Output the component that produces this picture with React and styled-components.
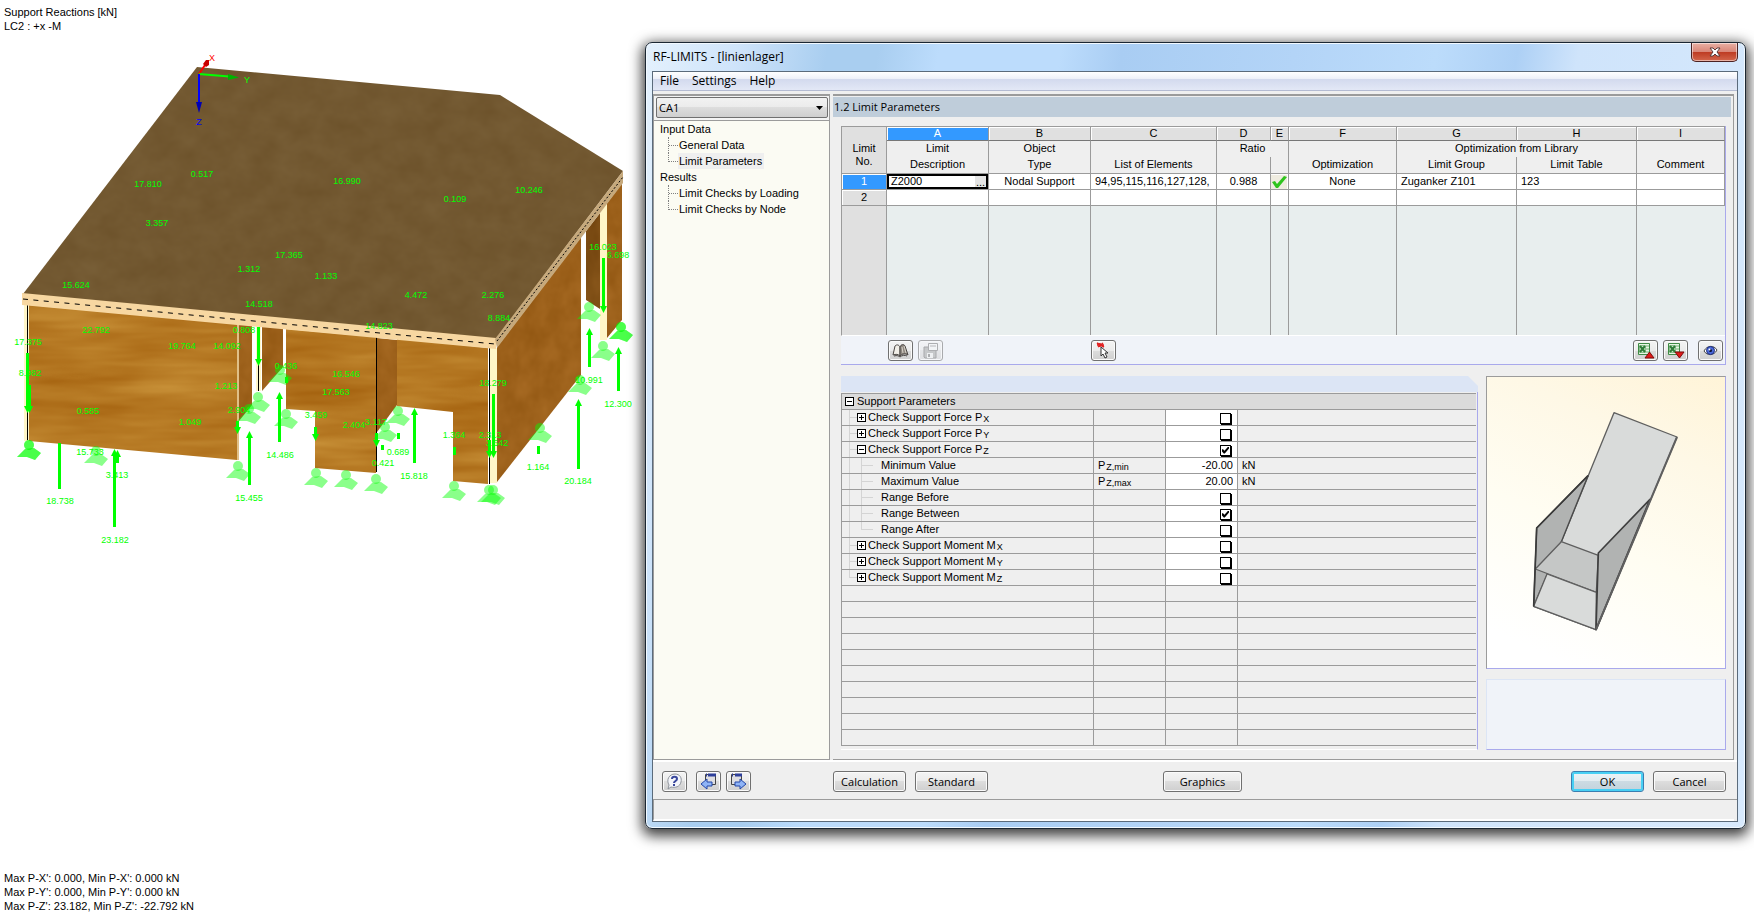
import React from "react";
import styled, { createGlobalStyle, css } from "styled-components";

const GRID_LINE = "#9b9b9b";
const LILAC = "#a9a9ec";
const UI_FONT = '"Open Sans", "Noto Sans", sans-serif';
const GRID_FONT = '"Liberation Sans", Arial, sans-serif';

const GlobalStyle = createGlobalStyle`
  * { box-sizing: border-box; }
  body { margin: 0; background: #fff; color: #000; font: 11px/16px ${GRID_FONT}; }
  button, input, select { font: inherit; color: inherit; margin: 0; padding: 0; }
`;

const Desktop = styled.main`
  display: flex;
  align-items: flex-start;
  min-height: 100vh;
  overflow: hidden;
`;

/* ---------- model view ---------- */

const ModelView = styled.section`
  flex: 0 0 645px;
  display: flex;
  flex-direction: column;
  min-height: 100vh;
`;

const Caption = styled.p`
  margin: 0;
  padding: ${(p) => (p.$bottom ? "0 0 4px 4px" : "5px 0 0 4px")};
  margin-top: ${(p) => (p.$bottom ? "auto" : "0")};
  line-height: 14px;
  white-space: pre-line;
`;

const Drawing = styled.svg`
  display: block;
  width: 100%;
`;

const Value = styled.text`
  font: 9px ${GRID_FONT};
  fill: ${(p) => p.$color || "#00ff00"};
  text-anchor: middle;
`;

const values = [
  ["17.810", 148, 184], ["0.517", 202, 174], ["3.357", 157, 223], ["17.365", 289, 255],
  ["1.312", 249, 269], ["1.133", 326, 276], ["15.624", 76, 285], ["16.990", 347, 181],
  ["0.109", 455, 199], ["10.246", 529, 190], ["16.023", 603, 247], ["6.698", 618, 255],
  ["4.472", 416, 295], ["2.276", 493, 295], ["8.884", 499, 318], ["14.823", 379, 326],
  ["14.518", 259, 304], ["22.792", 96, 330], ["17.375", 28, 342], ["8.982", 30, 373],
  ["19.764", 182, 346], ["14.092", 227, 346], ["0.808", 244, 330], ["1.213", 226, 386],
  ["2.904", 239, 410], ["0.436", 286, 366], ["0.585", 88, 411], ["1.049", 190, 422],
  ["15.733", 90, 452], ["3.413", 117, 475], ["18.738", 60, 501], ["23.182", 115, 540],
  ["14.486", 280, 455], ["15.455", 249, 498], ["3.459", 316, 415], ["16.546", 346, 374],
  ["17.563", 336, 392], ["2.404", 354, 425], ["3.117", 376, 422], ["0.421", 383, 463],
  ["0.689", 398, 452], ["15.818", 414, 476], ["1.364", 454, 435], ["2.313", 490, 435],
  ["3.642", 497, 443], ["18.279", 493, 383], ["1.164", 538, 467], ["20.184", 578, 481],
  ["10.991", 589, 380], ["12.300", 618, 404],
];

const supports = [
  [29, 445], [29, 445], [96, 451], [238, 466], [258, 397], [249, 409], [280, 370], [286, 414],
  [316, 473], [346, 475], [376, 479], [385, 427], [398, 411], [454, 486], [489, 490], [493, 490],
  [540, 428], [580, 380], [603, 346], [589, 307], [621, 327], [621, 327],
];

const upArrows = [
  [114, 527, 449], [249, 485, 431], [279, 442, 392], [414, 463, 408],
  [589, 367, 328], [618, 391, 347], [578, 469, 399], [117, 463, 450],
];

const downArrows = [
  [27, 353, 413], [29, 385, 413], [258, 327, 366], [237, 421, 434], [315, 427, 441],
  [376, 433, 447], [493, 394, 458], [489, 440, 458], [603, 258, 313],
];

const stubs = [
  [398, 433, 439], [382, 445, 450], [454, 447, 455], [538, 446, 454], [286, 377, 383], [59, 443, 489],
];

function Wood({ id, frequency, seed, from, to }) {
  const channel = (i) => `${from[i]} ${to[i]}`;
  return (
    <filter id={id} x="0" y="0" width="100%" height="100%" colorInterpolationFilters="sRGB">
      <feTurbulence type="fractalNoise" baseFrequency={frequency} numOctaves="3" seed={seed} />
      <feColorMatrix values="1 0 0 0 0  1 0 0 0 0  1 0 0 0 0  0 0 0 0 1" />
      <feComponentTransfer>
        <feFuncR type="table" tableValues={channel(0)} />
        <feFuncG type="table" tableValues={channel(1)} />
        <feFuncB type="table" tableValues={channel(2)} />
      </feComponentTransfer>
      <feComposite operator="in" in2="SourceGraphic" />
    </filter>
  );
}

function Model() {
  return (
    <Drawing viewBox="0 33 645 520" role="img" aria-label="Support reactions of the model">
      <defs>
        <Wood id="front" frequency="0.008 0.06" seed="4" from={[0.62, 0.35, 0.03]} to={[0.8, 0.59, 0.24]} />
        <Wood id="side" frequency="0.05 0.04" seed="9" from={[0.56, 0.33, 0.06]} to={[0.67, 0.43, 0.15]} />
        <Wood id="dark" frequency="0.06 0.03" seed="2" from={[0.44, 0.26, 0.05]} to={[0.56, 0.36, 0.12]} />
        <Wood id="roof" frequency="0.04 0.05" seed="7" from={[0.425, 0.32, 0.165]} to={[0.475, 0.375, 0.22]} />
      </defs>

      <g filter="url(#dark)">
        <polygon points="586,231 600,213 600,309 586,300" />
      </g>
      <g filter="url(#side)">
        <polygon points="607,203 622,183 622,320 607,338" />
        <polygon points="497,347 581,237 581,375 497,482" />
        <polygon points="239,324 252,325 252,405 239,421" />
        <polygon points="262,326 283,328 283,367 262,391" />
        <polygon points="377,338 397,340 397,405 377,432" />
      </g>
      <g filter="url(#front)">
        <polygon points="29,305 237,324 237,460 29,441" />
        <polygon points="286,329 376,337 376,473 315,468 315,411 286,409" />
        <polygon points="397,339 453,344 453,412 397,406" />
      </g>
      <g filter="url(#front)">
        <polygon points="453,344 488,348 488,484 453,481" />
      </g>

      <g fill="#fff6c8">
        <path d="M24 304H29V441H24Z M256 326H261V391H256Z M490 348H497V483H490Z M600 213L607 203V340H600Z" />
      </g>
      <path d="M237 324H239V460H237Z" fill="#e0c088" />
      <path d="M27.5 304V440 M258.5 327V391 M376.5 337V472 M489.5 348V484" stroke="#000" />

      <g filter="url(#roof)">
        <polygon points="197,67 500,95 623,171 496,339 23,294" />
      </g>
      <polygon points="22,293 496,338 496,349 22,305" fill="#f7d7a1" />
      <polygon points="495,339 623,171 623,183 497,348" fill="#c6a97c" />
      <path d="M23 299L495 344" stroke="#000" strokeDasharray="5 5.4" />
      <path d="M497 341L623 177" stroke="#000" strokeDasharray="2 2" />

      {supports.map(([x, y], i) => (
        <g key={i} fill="#00ff00" fillOpacity="0.46" transform={`translate(${x} ${y})`}>
          <circle r="5" />
          <path d="M-4 4L-12 12L-2 12L6 15L12 8L5 3Z" />
        </g>
      ))}

      <g stroke="#00ff00" fill="#00ff00" strokeWidth="3">
        {upArrows.map(([x, tail, head]) => (
          <g key={`${x}-${tail}`}>
            <path d={`M${x + 0.5} ${tail}V${head + 6}`} />
            <path d={`M${x - 3} ${head + 7}L${x + 0.5} ${head}L${x + 4} ${head + 7}Z`} stroke="none" />
          </g>
        ))}
        {downArrows.map(([x, tail, head]) => (
          <g key={`${x}-${tail}`}>
            <path d={`M${x + 0.5} ${tail}V${head - 6}`} />
            <path d={`M${x - 3} ${head - 7}L${x + 0.5} ${head}L${x + 4} ${head - 7}Z`} stroke="none" />
          </g>
        ))}
        {stubs.map(([x, from, to]) => (
          <path key={`${x}-${from}`} d={`M${x + 0.5} ${from}V${to}`} />
        ))}
      </g>

      <path d="M199 74L205 65" stroke="#f00" strokeWidth="2" />
      <path d="M203 64L206 60H209V65L206 67Z" fill="#c80000" />
      <path d="M199 74L229 76.5" stroke="#0f0" strokeWidth="2" />
      <path d="M228 74L239 77.5L228 80Z" fill="#00b400" />
      <path d="M199 74V104" stroke="#00f" strokeWidth="2" />
      <path d="M196 102H202L199 113Z" fill="#0000b4" />
      <Value x="212" y="61" $color="#ff0000">X</Value>
      <Value x="247" y="83">Y</Value>
      <Value x="199" y="125" $color="#0000ff">Z</Value>

      {values.map(([label, x, y]) => (
        <Value key={`${x}-${y}`} x={x} y={y + 3}>{label}</Value>
      ))}
    </Drawing>
  );
}

/* ---------- window frame ---------- */

const Frame = styled.section`
  flex: 1;
  min-width: 0;
  margin: 42px 8px 0 0;
  padding: 0 7px 6px 6px;
  border: 1px solid #1b2733;
  border-radius: 7px;
  background:
    linear-gradient(100deg, #e4f1fd 0, #cfe4fa 90px, #a9cef0 180px, #a9cef0 230px, #bcdcfc 290px, #bcdcfc 410px, #a9cdf3 470px, #b3d4f7 640px, #bcdcfb 780px, #add0f5 860px, #cfe4fb 920px, #d8eafd 100%);
  box-shadow: inset 0 0 0 1px #f2f9ff, 0 4px 13px 3px rgba(0, 0, 0, 0.75);
`;

const TitleBar = styled.header`
  display: flex;
  justify-content: space-between;
  align-items: flex-start;
  height: 28px;
  font: 12px/16px ${UI_FONT};
`;

const WindowTitle = styled.h1`
  margin: 6px 0 0 1px;
  font: inherit;
`;

const CloseButton = styled.button`
  display: flex;
  align-items: center;
  justify-content: center;
  width: 47px;
  height: 19px;
  border: 1px solid #4b2222;
  border-top: 0;
  border-radius: 0 0 5px 5px;
  background: linear-gradient(#e9b0a4, #d98678 48%, #bd3a22 50%, #d3664c);
  box-shadow: inset 0 0 0 1px rgba(255, 255, 255, 0.5);
`;

const Client = styled.div`
  border: 1px solid #5b6b7b;
  background: #efefef;
`;

const MenuBar = styled.nav`
  display: flex;
  gap: 13px;
  height: 19px;
  padding-left: 7px;
  border-bottom: 1px solid #b4bbd2;
  background: linear-gradient(#fff, #eef1f9 36%, #d3daee 40%, #e3e8f6);
  font: 12px/18px ${UI_FONT};
`;

const MenuItem = styled.button`
  border: 0;
  background: none;
`;

const Body = styled.div`
  display: grid;
  grid-template-columns: 177px 1fr;
  gap: 3px;
  margin: 3px 0 0;
  padding-right: 3px;
  padding-bottom: 2px;
  background: linear-gradient(#fff, #fff) bottom / 100% 2px no-repeat;
`;

/* ---------- navigator ---------- */

const Navigator = styled.aside`
  border: 1px solid ${GRID_LINE};
  border-top-width: 2px;
  background: #fbfbf3;
`;

const CaseBox = styled.div`
  position: relative;
  padding: 1px 1px 2px 2px;
  border-bottom: 1px solid ${GRID_LINE};
  background: #f4f4f4;
`;

const CaseSelect = styled.select`
  display: block;
  width: 100%;
  height: 21px;
  padding: 0 4px 0 2px;
  appearance: none;
  border: 1px solid #707070;
  border-radius: 2px;
  background: linear-gradient(#f2f2f2, #ebebeb 50%, #dddddd 50%, #cfcfcf);
  font-family: ${UI_FONT};
`;

const CaseArrow = styled.svg`
  position: absolute;
  right: 6px;
  top: 10px;
  pointer-events: none;
`;

const TreeGroup = styled.div`
  padding-left: 6px;
`;

const TreeList = styled.ul`
  margin: 0;
  padding: 0 0 0 8px;
  list-style: none;
`;

const TreeItem = styled.li`
  display: flex;
  align-items: center;
  height: 16px;

  &::before {
    content: "";
    width: 9px;
    height: 8px;
    margin-bottom: 8px;
    border-left: 1px dotted #808080;
    border-bottom: 1px dotted #808080;
  }
  &:not(:last-child)::before {
    height: 16px;
    margin: 0;
    border-bottom: 0;
    background: repeating-linear-gradient(90deg, #808080 0 1px, transparent 1px 2px) 0 8px / 100% 1px no-repeat;
  }
`;

const TreeLink = styled.a`
  padding: 0 2px 0 1px;
  color: #000;
  text-decoration: none;
  white-space: nowrap;
  background: ${(p) => (p.$current ? "#efefef" : "none")};
`;

/* ---------- main pane ---------- */

const MainPane = styled.section`
  min-width: 0;
  padding-bottom: 9px;
  border: solid ${GRID_LINE};
  border-width: 2px 1px 1px 0;
`;

const PaneTitle = styled.h2`
  height: 20px;
  margin: 1px 2px 9px 0;
  padding-left: 1px;
  background: #bfcdda;
  font: 11px/20px ${UI_FONT};
`;

const LimitBlock = styled.div`
  margin: 0 7px 11px 8px;
  border-right: 1px solid ${LILAC};
  border-bottom: 1px solid ${LILAC};
`;

const LimitTable = styled.table`
  width: 100%;
  table-layout: fixed;
  border-collapse: separate;
  border-spacing: 0;
  border-top: 1px solid ${GRID_LINE};
  border-left: 1px solid ${GRID_LINE};
  border-bottom: 1px solid #fff;
`;

const cell = css`
  padding: 0 4px;
  border: 0 solid ${GRID_LINE};
  font-weight: normal;
  white-space: nowrap;
  overflow: hidden;
`;

const LetterCell = styled.th`
  ${cell}
  height: 14px;
  line-height: 13px;
  padding: 0;
  border-width: 0 1px 1px 0;
  border-bottom-color: #777;
  background: ${(p) => (p.$active ? "#3399ff" : "#e0e0e0")};
  color: ${(p) => (p.$active ? "#fff" : "#000")};
  box-shadow: inset 1px 1px #fff;
`;

const HeadCell = styled.th`
  ${cell}
  height: ${(p) => (p.$low ? "17px" : "16px")};
  line-height: 14px;
  vertical-align: ${(p) => (p.$corner ? "bottom" : "top")};
  ${(p) => p.$corner && "line-height: 13px; padding-bottom: 5px;"}
  border-right-width: 1px;
  border-bottom-width: ${(p) => (p.$low || p.$corner ? "1px" : "0")};
  background: ${(p) => (p.$corner ? "#e0e0e0" : "#efefef")};
`;

const RowNumber = styled.th`
  ${cell}
  height: 16px;
  line-height: 15px;
  border-width: 0 1px 1px 0;
  background: ${(p) => (p.$active ? "#3399ff" : "#e0e0e0")};
  color: ${(p) => (p.$active ? "#fff" : "#000")};
  box-shadow: inset 1px 1px #fff;
`;

const DataCell = styled.td`
  ${cell}
  height: 16px;
  line-height: 15px;
  padding: ${(p) => (p.$tight ? "0" : "0 4px")};
  border-width: 0 1px 1px 0;
  background: #fff;
  text-align: ${(p) => p.$align || "left"};
  text-overflow: clip;
`;

const BlankCell = styled.td`
  height: 129px;
  border-right: 1px solid ${GRID_LINE};
  background: ${(p) => (p.$first ? "#e0e0e0" : "#e8eeee")};
  &:last-child { border-right: 0; }
`;

const EditCell = styled.div`
  display: flex;
  height: 15px;
  border: 1px solid #000;
  box-shadow: inset 0 0 0 1px #000;
`;

const EditInput = styled.input`
  flex: 1;
  min-width: 0;
  height: 13px;
  padding-left: 3px;
  border: 0;
  outline: 0;
  background: none;
`;

const EditMore = styled.button`
  width: 11px;
  height: 11px;
  margin: 1px;
  border: 0;
  background: #e4e4e4;
  line-height: 8px;
`;

const ToolStrip = styled.div`
  display: flex;
  gap: 5px;
  height: 28px;
  padding: 4px 2px 0 47px;
  background: #f0f3f9;
`;

const glossy = css`
  border: 1px solid #707070;
  border-radius: 3px;
  background: linear-gradient(#f4f4f4, #ebebeb 50%, #dddddd 50%, #cfcfcf);
  box-shadow: inset 0 0 0 1px #fbfbfb;
`;

const IconButton = styled.button`
  ${glossy}
  display: flex;
  align-items: center;
  justify-content: center;
  flex: 0 0 25px;
  height: 21px;
  opacity: ${(p) => (p.disabled ? 0.55 : 1)};
`;

const Spacer = styled.span`
  flex: ${(p) => (p.$width === undefined ? "1" : `0 0 ${p.$width}px`)};
`;

const Lower = styled.div`
  display: grid;
  grid-template-columns: 1fr 240px;
  gap: 8px;
  margin: 0 7px 0 8px;
`;

const ParamBand = styled.div`
  height: 16px;
  background: #dce5f5;
  clip-path: polygon(0 0, calc(100% - 10px) 0, 100% 10px, 100% 100%, 0 100%);
`;

const ParamBox = styled.div`
  padding: 1px 1px 3px 0;
  border-right: 1px solid ${LILAC};
  border-bottom: 1px solid #fff;
`;

const ParamTable = styled.table`
  width: 100%;
  table-layout: fixed;
  border-collapse: separate;
  border-spacing: 0;
  border-top: 1px solid ${GRID_LINE};
  border-left: 1px solid ${GRID_LINE};
`;

const ParamCell = styled.td`
  ${cell}
  height: 16px;
  line-height: 15px;
  padding: ${(p) => (p.$name ? "0 0 0 7px" : "0 4px")};
  border-bottom-width: 1px;
  border-right-width: ${(p) => (p.$last ? "0" : "1px")};
  background: ${(p) => (p.$header ? "#dbdbdb" : p.$value ? "#fff" : "#efefef")};
  ${(p) => p.$header && "padding-left: 3px;"}
`;

const NameLine = styled.label`
  display: flex;
  align-items: center;
  height: 15px;
`;

const Guide = styled.span`
  flex: 0 0 ${(p) => p.$width}px;
  height: 15px;
  margin-right: ${(p) => p.$after || 0}px;
  background:
    linear-gradient(#d4d4d4, #d4d4d4) 0 0 / 1px ${(p) => (p.$end ? "8px" : "100%")} no-repeat,
    linear-gradient(#d4d4d4, #d4d4d4) 0 7px / ${(p) => (p.$branch ? "100%" : "0")} 1px no-repeat;
`;

const Expander = styled.button`
  flex: 0 0 9px;
  height: 9px;
  margin-right: ${(p) => (p.$root ? 3 : 2)}px;
  border: 1px solid #000;
  background:
    linear-gradient(#000, #000) center / 5px 1px no-repeat,
    linear-gradient(#000, #000) center / 1px ${(p) => (p.$open ? "0" : "5px")} no-repeat,
    #fff;
`;

const Sub = styled.sub`
  margin-left: 1px;
  font-size: 9px;
  line-height: 9px;
  vertical-align: -1px;
`;

const Check = styled.input`
  display: block;
  width: 11px;
  height: 11px;
  margin: 1px 2px 0 auto;
  appearance: none;
  border: 1px solid #000;
  background: #fff;
  box-shadow: 1px 1px #000;

  &:checked::before {
    content: "";
    display: block;
    width: 7px;
    height: 7px;
    margin: 1px;
    background: #000;
    clip-path: polygon(0 40%, 15% 40%, 35% 60%, 90% 0, 100% 0, 100% 30%, 40% 100%, 25% 100%, 0 70%);
  }
`;

const NumberBox = styled.input`
  display: block;
  width: 100%;
  height: 15px;
  border: 0;
  background: none;
  text-align: right;
`;

const SideColumn = styled.div`
  display: flex;
  flex-direction: column;
  gap: 10px;
`;

const Preview = styled.figure`
  height: 293px;
  margin: 0;
  border: 1px solid ${LILAC};
  border-top-color: ${GRID_LINE};
  border-left-color: ${GRID_LINE};
  background: linear-gradient(25deg, #fff 10%, #fffdf2 45%, #fef8e6 75%, #fff4d8);
  background-clip: padding-box;
`;

const InfoBox = styled.div`
  flex: 1;
  border: 1px solid ${LILAC};
  border-top-color: #dce5f5;
  border-left-color: #dce5f5;
  background: #f0f3f9;
`;

/* ---------- footer ---------- */

const ButtonBar = styled.footer`
  display: flex;
  gap: 9px;
  height: 38px;
  padding: 9px 11px 0 9px;
  border-bottom: 1px solid ${GRID_LINE};
`;

const HelpGroup = styled.div`
  display: flex;
  flex: 0 0 162px;
  gap: 9px;
`;

const StepGroup = styled.div`
  display: flex;
  gap: 5px;
`;

const TextButton = styled.button`
  ${glossy}
  width: ${(p) => p.$width || 73}px;
  height: 21px;
  font: 11px/18px ${UI_FONT};
  ${(p) =>
    p.$primary &&
    css`
      border-color: #3c7fb1;
      background: linear-gradient(#eef4f7, #e2ebf0 50%, #ccdbe3 50%, #c2d2dc);
      box-shadow: inset 0 0 0 2px #48d0f4;
    `}
`;

const StatusBar = styled.div`
  height: 21px;
  margin-right: 3px;
  border-left: 1px solid ${GRID_LINE};
  border-bottom: 2px solid #fff;
`;

/* ---------- icons ---------- */

const BookIcon = () => (
  <svg width="17" height="15" viewBox="0 0 17 15">
    <path d="M1 12L3 3C5 1 7 2 8 4L8 13C6 11 4 11 1 12Z" fill="#f2efe8" stroke="#4a4643" />
    <path d="M8 4C9 1 12 1 13 3L16 12C13 10 10 11 8 13Z" fill="#8f8880" stroke="#4a4643" />
    <path d="M2 13C5 12 7 13 8 14C10 12 13 12 15 13" fill="none" stroke="#4a4643" />
    <path d="M10 4L11 10M12 3L14 10" stroke="#d9d3c9" />
  </svg>
);

const SaveIcon = () => (
  <svg width="17" height="17" viewBox="0 0 17 17">
    <path d="M2 5H14V16H3L2 15Z" fill="#a5a5a5" stroke="#6e6e6e" />
    <path d="M5 11H11V16H5Z" fill="#eee" />
    <path d="M6 12H8V15H6Z" fill="#777" />
    <path d="M6.5 1.5H15.5V8.5H6.5Z" fill="#f5f5f5" stroke="#777" />
    <path d="M8 4H14" stroke="#888" />
  </svg>
);

const PickIcon = () => (
  <svg width="17" height="17" viewBox="0 0 17 17">
    <path d="M2 1L9 5M8 1L3 5M5 1V5M2 3H9" stroke="#e02020" strokeWidth="1.5" />
    <path d="M6 5L6 14L8 12L10 16L12 15L10 11H13Z" fill="#fff" stroke="#333" />
  </svg>
);

const SheetIcon = ({ down }) => (
  <svg width="19" height="17" viewBox="0 0 19 17">
    <path d="M2.5 1.5H13.5V12.5H2.5Z" fill="#e9f5e6" stroke="#3f8a45" />
    <path d="M10 4H13M10 7H13M10 10H13" stroke="#6fb072" />
    <path d="M3.5 3.5H9.5V10.5H3.5Z" fill="#cfe8cd" stroke="#8cc08e" />
    <path d="M4 4L9 10M9 4L4 10" stroke="#2f7d38" strokeWidth="2" />
    <path d={down ? "M9 10H18L13.5 16Z" : "M9 16H18L13.5 10Z"} fill="#e01818" stroke="#7c0c0c" />
  </svg>
);

const EyeIcon = () => (
  <svg width="15" height="11" viewBox="0 0 15 11">
    <path d="M1 6C4 0 11 0 14 5C11 11 4 11 1 6Z" fill="#fff" stroke="#444" />
    <circle cx="7.5" cy="5.5" r="4" fill="#4a68d8" stroke="#22307c" />
    <circle cx="7.5" cy="5.5" r="1.5" fill="#0a1030" />
    <circle cx="6.5" cy="4.5" r="1" fill="#fff" />
  </svg>
);

const HelpIcon = () => (
  <svg width="17" height="17" viewBox="0 0 17 17">
    <path d="M3 12C0 7 3 1 9 1C14 1 16 5 15 9C14 14 9 15 5 14L2 16Z" fill="#f3f5fa" stroke="#8f949c" />
    <path d="M6 6C6 3 11 3 11 6C11 8 8 8 8 10" fill="none" stroke="#39479c" strokeWidth="2" />
    <path d="M7 11H9V13H7Z" fill="#39479c" />
  </svg>
);

const StepIcon = ({ next }) => (
  <svg width="17" height="17" viewBox="0 0 17 17">
    <path d={next ? "M1.5 1.5H11.5V11.5H1.5Z" : "M5.5 1.5H15.5V11.5H5.5Z"} fill="#dedee2" stroke="#444" />
    <path d={next ? "M5 2H12M2 2H3" : "M8 2H16M6 2H7"} stroke="#2e3f9a" strokeWidth="3" />
    <path
      d={next ? "M5 9H10V6L16 11L10 16V13H5Z" : "M12 9H7V6L1 11L7 16V13H12Z"}
      fill="#8fb4f6"
      stroke="#2347a8"
    />
  </svg>
);

const TickIcon = () => (
  <svg width="16" height="14" viewBox="0 0 16 14" display="block">
    <path d="M0 0H16V14H0Z" fill="#efece0" />
    <path d="M1 7L4 6L6 9L13 1L16 2L7 13H5Z" fill="#2fc41e" />
  </svg>
);

/* ---------- content ---------- */

const columnWidths = [45, 102, 102, 126, 54, 18, 108, 120, 120];

const params = [
  { name: "Check Support Force P", sub: "X", check: false },
  { name: "Check Support Force P", sub: "Y", check: false },
  { name: "Check Support Force P", sub: "Z", check: true, open: true },
  { name: "Minimum Value", child: true, symbol: "min", value: "-20.00" },
  { name: "Maximum Value", child: true, symbol: "max", value: "20.00" },
  { name: "Range Before", child: true, check: false },
  { name: "Range Between", child: true, check: true },
  { name: "Range After", child: true, check: false, end: true },
  { name: "Check Support Moment M", sub: "X", check: false },
  { name: "Check Support Moment M", sub: "Y", check: false },
  { name: "Check Support Moment M", sub: "Z", check: false, end: true },
];

function Tree({ title, items }) {
  return (
    <TreeGroup>
      {title}
      <TreeList>
        {items.map((item) => (
          <TreeItem key={item}>
            <TreeLink href="#" $current={item === "Limit Parameters"}>{item}</TreeLink>
          </TreeItem>
        ))}
      </TreeList>
    </TreeGroup>
  );
}

function Limits() {
  return (
    <LimitTable>
      <colgroup>
        {columnWidths.map((w, i) => <col key={i} width={w} />)}
        <col />
      </colgroup>
      <thead>
        <tr>
          <HeadCell rowSpan={3} $corner>Limit<br />No.</HeadCell>
          {"ABCDEFGHI".split("").map((l) => <LetterCell key={l} $active={l === "A"}>{l}</LetterCell>)}
        </tr>
        <tr>
          <HeadCell>Limit</HeadCell>
          <HeadCell>Object</HeadCell>
          <HeadCell />
          <HeadCell colSpan={2}>Ratio</HeadCell>
          <HeadCell />
          <HeadCell colSpan={2}>Optimization from Library</HeadCell>
          <HeadCell />
        </tr>
        <tr>
          <HeadCell $low>Description</HeadCell>
          <HeadCell $low>Type</HeadCell>
          <HeadCell $low>List of Elements</HeadCell>
          <HeadCell $low />
          <HeadCell $low />
          <HeadCell $low>Optimization</HeadCell>
          <HeadCell $low>Limit Group</HeadCell>
          <HeadCell $low>Limit Table</HeadCell>
          <HeadCell $low>Comment</HeadCell>
        </tr>
      </thead>
      <tbody>
        <tr>
          <RowNumber $active>1</RowNumber>
          <DataCell $tight>
            <EditCell>
              <EditInput aria-label="Limit description" defaultValue="Z2000" />
              <EditMore aria-label="Choose limit">...</EditMore>
            </EditCell>
          </DataCell>
          <DataCell $align="center">Nodal Support</DataCell>
          <DataCell>94,95,115,116,127,128,</DataCell>
          <DataCell $align="center">0.988</DataCell>
          <DataCell $tight><TickIcon /></DataCell>
          <DataCell $align="center">None</DataCell>
          <DataCell>Zuganker Z101</DataCell>
          <DataCell>123</DataCell>
          <DataCell />
        </tr>
        <tr>
          <RowNumber>2</RowNumber>
          {columnWidths.map((w, i) => <DataCell key={i} />)}
        </tr>
        <tr>
          <BlankCell $first />
          {columnWidths.map((w, i) => <BlankCell key={i} />)}
        </tr>
      </tbody>
    </LimitTable>
  );
}

function ParamRow({ row, index }) {
  const id = `param-${index}`;
  return (
    <tr>
      <ParamCell $name>
        <NameLine htmlFor={id}>
          {row.child ? (
            <>
              <Guide $width={12} />
              <Guide $width={12} $branch $end={row.end} $after={8} />
            </>
          ) : (
            <>
              <Guide $width={8} $branch $end={row.end} />
              <Expander type="button" aria-label="Expand" $open={row.open} />
            </>
          )}
          <span>
            {row.name}
            {row.sub && <Sub>{row.sub}</Sub>}
          </span>
        </NameLine>
      </ParamCell>
      <ParamCell>{row.symbol && <>P<Sub>Z,{row.symbol}</Sub></>}</ParamCell>
      <ParamCell $value>
        {row.value ? <NumberBox id={id} defaultValue={row.value} /> : <Check type="checkbox" id={id} defaultChecked={row.check} />}
      </ParamCell>
      <ParamCell $last>{row.value && "kN"}</ParamCell>
    </tr>
  );
}

function Params() {
  return (
    <ParamTable>
      <colgroup>
        <col width={252} />
        <col width={72} />
        <col width={72} />
        <col />
      </colgroup>
      <tbody>
        <tr>
          <ParamCell $header $last colSpan={4}>
            <NameLine as="div">
              <Expander type="button" aria-label="Collapse" $open $root />
              Support Parameters
            </NameLine>
          </ParamCell>
        </tr>
        {params.map((row, i) => <ParamRow key={i} row={row} index={i} />)}
        {Array.from({ length: 10 }, (_, i) => (
          <tr key={i}>
            <ParamCell />
            <ParamCell />
            <ParamCell />
            <ParamCell $last />
          </tr>
        ))}
      </tbody>
    </ParamTable>
  );
}

function BracketDrawing() {
  return (
    <Drawing viewBox="262 21 714 873" stroke="#5f5f5f" strokeWidth="4" strokeLinejoin="round" role="img" aria-label="Support bracket">
      <path d="M643 128L832 201L589 779L402 709L485 515Z" fill="#d9dbda" />
      <path d="M565 317L411 474L402 709L485 515Z" fill="#b1b3b2" stroke="#4a4a4a" />
      <path d="M407 597L485 515L596 556L590 667Z" fill="#c5c7c6" />
      <path d="M442 612L402 709L589 779L590 667Z" fill="#d9dbda" />
      <path d="M751 388L596 549L589 779Z" fill="#b1b3b2" stroke="#3f3f3f" strokeWidth="5" />
      <path d="M565 317L411 474L402 709" fill="none" stroke="#3a3a3a" strokeWidth="5" />
      <path d="M832 201L589 779" strokeWidth="6" />
    </Drawing>
  );
}

export default function App() {
  return (
    <>
      <GlobalStyle />
      <Desktop>
        <ModelView>
          <Caption>{"Support Reactions [kN]\nLC2 : +x -M"}</Caption>
          <Model />
          <Caption $bottom>
            {"Max P-X': 0.000, Min P-X': 0.000 kN\nMax P-Y': 0.000, Min P-Y': 0.000 kN\nMax P-Z': 23.182, Min P-Z': -22.792 kN"}
          </Caption>
        </ModelView>

        <Frame>
          <TitleBar>
            <WindowTitle>RF-LIMITS - [linienlager]</WindowTitle>
            <CloseButton aria-label="Close">
              <svg width="12" height="10" viewBox="0 0 12 10">
                <path d="M1 1H4L6 3L8 1H11L8 5L11 9H8L6 7L4 9H1L4 5Z" fill="#fff" stroke="#5a3a3a" />
              </svg>
            </CloseButton>
          </TitleBar>
          <Client>
            <MenuBar>
              <MenuItem>File</MenuItem>
              <MenuItem>Settings</MenuItem>
              <MenuItem>Help</MenuItem>
            </MenuBar>
            <Body>
              <Navigator>
                <CaseBox>
                  <CaseSelect aria-label="Design case" defaultValue="CA1">
                    <option>CA1</option>
                  </CaseSelect>
                  <CaseArrow width="7" height="4"><path d="M0 0H7L3.5 4Z" /></CaseArrow>
                </CaseBox>
                <Tree title="Input Data" items={["General Data", "Limit Parameters"]} />
                <Tree title="Results" items={["Limit Checks by Loading", "Limit Checks by Node"]} />
              </Navigator>
              <MainPane>
                <PaneTitle>1.2 Limit Parameters</PaneTitle>
                <LimitBlock>
                  <Limits />
                  <ToolStrip>
                    <IconButton aria-label="Library"><BookIcon /></IconButton>
                    <IconButton aria-label="Save" disabled><SaveIcon /></IconButton>
                    <Spacer $width={138} />
                    <IconButton aria-label="Pick elements"><PickIcon /></IconButton>
                    <Spacer />
                    <IconButton aria-label="Export"><SheetIcon /></IconButton>
                    <IconButton aria-label="Import"><SheetIcon down /></IconButton>
                    <Spacer $width={0} />
                    <IconButton aria-label="View"><EyeIcon /></IconButton>
                  </ToolStrip>
                </LimitBlock>
                <Lower>
                  <div>
                    <ParamBand />
                    <ParamBox><Params /></ParamBox>
                  </div>
                  <SideColumn>
                    <Preview><BracketDrawing /></Preview>
                    <InfoBox />
                  </SideColumn>
                </Lower>
              </MainPane>
            </Body>
            <ButtonBar>
              <HelpGroup>
                <IconButton aria-label="Help"><HelpIcon /></IconButton>
                <StepGroup>
                  <IconButton aria-label="Previous table"><StepIcon /></IconButton>
                  <IconButton aria-label="Next table"><StepIcon next /></IconButton>
                </StepGroup>
              </HelpGroup>
              <TextButton>Calculation</TextButton>
              <TextButton>Standard</TextButton>
              <Spacer $width={157} />
              <TextButton $width={79}>Graphics</TextButton>
              <Spacer />
              <TextButton $primary>OK</TextButton>
              <TextButton>Cancel</TextButton>
            </ButtonBar>
            <StatusBar />
          </Client>
        </Frame>
      </Desktop>
    </>
  );
}
